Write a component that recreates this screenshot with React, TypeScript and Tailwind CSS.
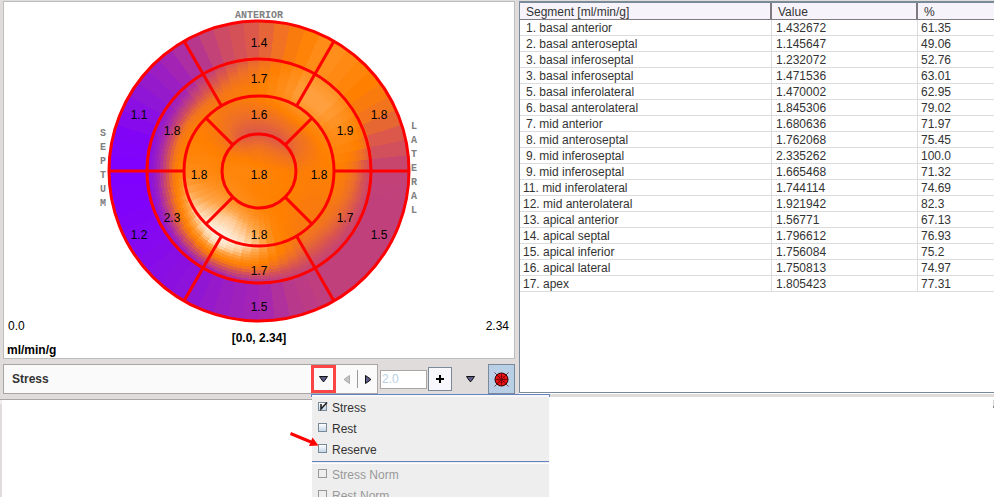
import React from "react";

type Row = [string, string, string];

const rows: Row[] = [
  ["1. basal anterior", "1.432672", "61.35"],
  ["2. basal anteroseptal", "1.145647", "49.06"],
  ["3. basal inferoseptal", "1.232072", "52.76"],
  ["3. basal inferoseptal", "1.471536", "63.01"],
  ["5. basal inferolateral", "1.470002", "62.95"],
  ["6. basal anterolateral", "1.845306", "79.02"],
  ["7. mid anterior", "1.680636", "71.97"],
  ["8. mid anteroseptal", "1.762068", "75.45"],
  ["9. mid inferoseptal", "2.335262", "100.0"],
  ["9. mid inferoseptal", "1.665468", "71.32"],
  ["11. mid inferolateral", "1.744114", "74.69"],
  ["12. mid anterolateral", "1.921942", "82.3"],
  ["13. apical anterior", "1.56771", "67.13"],
  ["14. apical septal", "1.796612", "76.93"],
  ["15. apical inferior", "1.756084", "75.2"],
  ["16. apical lateral", "1.750813", "74.97"],
  ["17. apex", "1.805423", "77.31"],
];

// Colour scale from low (violet) to high (white) uptake.
const palette = [
  [127, 0, 255], [144, 22, 212], [166, 38, 176], [192, 64, 124], [216, 84, 80], [238, 112, 38],
  [255, 128, 0], [255, 143, 30], [255, 166, 74], [255, 208, 160], [255, 246, 236],
];

function colour(v: number) {
  const c = Math.max(0, Math.min(9.999, v));
  const i = Math.floor(c);
  const f = c - i;
  const rgb = palette[i].map((a, k) => Math.round(a + (palette[i + 1][k] - a) * f));
  return `rgb(${rgb.join(",")})`;
}

// Samples every 15 degrees, clockwise from anterior, for each radius.
const profile: { r: number; v: number[] }[] = [
  { r: 0, v: Array(24).fill(6.3) },
  { r: 19, v: [5.5, 5.4, 5.4, 5.5, 5.6, 5.8, 6.1, 6.1, 6.1, 6.1, 6.1, 6.1, 6.1, 6.1, 6.2, 6.2, 6.3, 6.3, 6.4, 6.3, 6.1, 5.9, 5.6, 5.5] },
  { r: 38, v: [4.1, 4.1, 4.1, 4.3, 4.7, 5.2, 5.8, 5.9, 6, 6, 6, 6.1, 6.3, 6.7, 7, 7, 6.9, 6.6, 6.3, 6.1, 5.7, 4.9, 4.3, 4.1] },
  { r: 56, v: [5, 5.1, 5.3, 5.3, 5.3, 5.6, 5.9, 5.8, 5.7, 5.7, 5.9, 6.3, 7.5, 8.3, 8.9, 8.5, 7.8, 7.2, 6.6, 6.3, 5.9, 5.5, 5, 4.9] },
  { r: 75, v: [6, 6.5, 7.2, 7.1, 6.6, 6.3, 6, 5.8, 5.6, 5.5, 5.6, 6.3, 8.5, 9.6, 10, 9.8, 9, 8, 6.8, 6.2, 6, 5.8, 5.6, 5.7] },
  { r: 85, v: [5.9, 6.8, 7.7, 7.7, 7, 6.4, 5.8, 5.5, 5.2, 5, 5, 5.9, 7.2, 8.6, 9.5, 8.3, 7, 6.1, 5.6, 5.5, 5.4, 5.3, 5.3, 5.6] },
  { r: 96, v: [5.5, 6.6, 7.7, 7.7, 7, 6.2, 5, 4.7, 4.4, 4.2, 4.2, 4.8, 5.7, 6, 6, 5.1, 4.2, 3.4, 2.8, 2.9, 3.1, 3.4, 4.1, 5] },
  { r: 105, v: [5.2, 6.3, 7.4, 7.4, 6.7, 5.8, 3.9, 3.8, 3.6, 3.5, 3.5, 3.7, 3.6, 3.4, 3.2, 2.7, 2, 1.4, 1.2, 1.4, 1.7, 2.2, 3.4, 4.4] },
  { r: 113, v: [4.7, 5.9, 7.2, 7.1, 6.2, 4.8, 3.3, 3.1, 3.1, 3.1, 3.1, 2.9, 2.1, 1.6, 1.1, 0.8, 0.5, 0.4, 0.4, 0.4, 0.9, 1.6, 2.6, 3.8] },
  { r: 122, v: [4.3, 5.7, 7.1, 6.4, 5.6, 4.2, 3.1, 3, 3, 3, 3, 2.7, 1.9, 1.5, 0.9, 0.6, 0.3, 0.1, 0, 0.2, 0.8, 1.5, 2.5, 3.6] },
  { r: 150, v: [4.3, 5.6, 7, 6.3, 5.4, 4.1, 3.1, 3, 3, 3, 3, 2.7, 1.9, 1.5, 0.9, 0.6, 0.3, 0.1, 0, 0.2, 0.8, 1.5, 2.4, 3.5] },
];

function sample(r: number, deg: number) {
  const a = deg / 15;
  const i = Math.floor(a) % 24;
  const f = a - Math.floor(a);
  let k = 0;
  while (k < profile.length - 2 && profile[k + 1].r < r) k++;
  const lo = profile[k];
  const hi = profile[k + 1];
  const g = (r - lo.r) / (hi.r - lo.r);
  const at = (v: number[]) => v[i] + (v[(i + 1) % 24] - v[i]) * f;
  return at(lo.v) + (at(hi.v) - at(lo.v)) * g;
}

const CX = 259;
const CY = 171;

function point(r: number, deg: number) {
  const t = (deg * Math.PI) / 180;
  return [CX + r * Math.sin(t), CY - r * Math.cos(t)];
}

const STEP = 6;
const cells: { d: string; fill: string }[] = [];
for (let r = 150; r > 0; r -= 3) {
  for (let deg = 0; deg < 360; deg += STEP) {
    const [x1, y1] = point(r, deg);
    const [x2, y2] = point(r, deg + STEP);
    cells.push({
      d: `M${CX} ${CY}L${x1.toFixed(2)} ${y1.toFixed(2)}A${r} ${r} 0 0 1 ${x2.toFixed(2)} ${y2.toFixed(2)}Z`,
      fill: colour(sample(r > 114 ? 136 : r - 1, deg + STEP / 2)),
    });
  }
}

const outerSpokes = [30, 90, 150, 210, 270, 330];
const innerSpokes = [45, 135, 225, 315];

const labels: [number, number, string][] = [
  [259, 47, "1.4"], [259, 83, "1.7"], [259, 119, "1.6"], [259, 179, "1.8"],
  [199, 179, "1.8"], [319, 179, "1.8"], [139, 119, "1.1"], [172, 135, "1.8"],
  [345, 135, "1.9"], [379, 119, "1.8"], [172, 222, "2.3"], [139, 239, "1.2"],
  [345, 222, "1.7"], [379, 239, "1.5"], [259, 239, "1.8"], [259, 275, "1.7"], [259, 311, "1.5"],
];

function Spoke({ deg, from, to }: { deg: number; from: number; to: number }) {
  const [x1, y1] = point(from, deg);
  const [x2, y2] = point(to, deg);
  return <line x1={x1} y1={y1} x2={x2} y2={y2} />;
}

function PolarMap() {
  return (
    <svg viewBox="89 2 340 318" width="340" height="318" className="mx-auto block overflow-visible">
      <g shapeRendering="crispEdges">
        {cells.map((c, i) => (
          <path key={i} d={c.d} fill={c.fill} />
        ))}
      </g>
      <g fill="none" stroke="#ff0000" strokeWidth="3">
        {[150, 112, 75, 37].map((r) => (
          <circle key={r} cx={CX} cy={CY} r={r} />
        ))}
        {outerSpokes.map((d) => (
          <Spoke key={d} deg={d} from={75} to={150} />
        ))}
        {innerSpokes.map((d) => (
          <Spoke key={d} deg={d} from={37} to={75} />
        ))}
      </g>
      <g textAnchor="middle" className="fill-black text-[12px]">
        {labels.map(([x, y, t], i) => (
          <text key={i} x={x} y={y}>{t}</text>
        ))}
      </g>
      <g textAnchor="middle" className="fill-[#808080] font-['Liberation_Mono',monospace] text-[10px] font-bold">
        <text x="259" y="18">ANTERIOR</text>
        {"SEPTUM".split("").map((c, i) => (
          <text key={i} x="103" y={136 + i * 14}>{c}</text>
        ))}
        {"LATERAL".split("").map((c, i) => (
          <text key={i} x="414" y={129 + i * 14}>{c}</text>
        ))}
      </g>
    </svg>
  );
}

function DownTriangle() {
  return (
    <svg width="9" height="6" viewBox="0 0 9 6" className="block">
      <path d="M0.5 0.5H8.5L5 5.5H4Z" fill="#5d5d8c" stroke="#111" />
    </svg>
  );
}

function MapIcon() {
  return (
    <svg width="15" height="15" viewBox="0 0 15 15" className="block">
      <circle cx="7.5" cy="7.5" r="6.5" fill="#ee1111" stroke="#300" />
      <circle cx="7.5" cy="7.5" r="3.2" fill="none" stroke="#900" strokeWidth="0.6" />
      <path d="M7.5 1V14M1 7.5H14M0.5 0.5L14.5 14.5M14.5 0.5L0.5 14.5" stroke="#500" strokeWidth="0.7" />
    </svg>
  );
}

function Toolbar() {
  return (
    <div className="relative mt-[5px] flex h-[30px] items-center">
      <div className="flex h-full flex-1 border border-[#aaa6a6] bg-[#fafafa]">
        <div className="flex flex-1 items-center pl-2 text-[12px] font-bold text-[#333]">Stress</div>
        <button
          aria-label="Choose map"
          className="flex w-[25px] items-center justify-center border-[3px] border-[#fb4444] bg-[#fafafa]"
        >
          <DownTriangle />
        </button>
        <button aria-label="Previous" className="flex w-[21px] items-center justify-center">
          <svg width="6" height="9" viewBox="0 0 6 9"><path d="M5.5 0.5V8.5L0.5 5V4Z" fill="#c4c4c4" stroke="#aaa" /></svg>
        </button>
        <div className="my-[5px] w-px bg-[#999]" />
        <button aria-label="Next" className="flex w-[19px] items-center justify-center">
          <svg width="6" height="9" viewBox="0 0 6 9"><path d="M0.5 0.5V8.5L5.5 5V4Z" fill="#5d5d8c" stroke="#111" /></svg>
        </button>
      </div>
      <input
        aria-label="Step"
        defaultValue="2.0"
        className="ml-[2px] h-[19px] w-[47px] border border-[#aaa6a6] bg-white pl-px text-[12px] text-[#b8cfe5] outline-none"
      />
      <button
        aria-label="Add"
        className="ml-px flex h-[24px] w-[24px] items-center justify-center border border-[#7a8a99] bg-[#f8f8fc]"
      >
        <svg width="8" height="8" viewBox="0 0 8 8"><path d="M4 0V8M0 4H8" stroke="#000" strokeWidth="2" /></svg>
      </button>
      <button aria-label="More" className="flex h-full w-[36px] items-center justify-center">
        <DownTriangle />
      </button>
      <button
        aria-label="Polar map"
        className="flex h-full w-[27px] items-center justify-center border border-[#7a8a99] bg-[#b8cfe5]"
      >
        <MapIcon />
      </button>
      <Menu />
    </div>
  );
}

function MenuItem({ label, checked, disabled }: { label: string; checked?: boolean; disabled?: boolean }) {
  return (
    <label
      className={`flex h-[21px] items-center gap-1 pl-[6px] text-[12px] ${disabled ? "text-[#999]" : "text-[#333]"}`}
    >
      <span className="relative -mt-[2px] block h-[10px] w-[10px]">
        <input
          type="checkbox"
          defaultChecked={checked}
          disabled={disabled}
          className="block h-[9px] w-[9px] appearance-none border border-[#7a8a99] bg-linear-to-b from-white to-[#c4d6e8] disabled:border-[#999] disabled:bg-none"
        />
        {checked && (
          <svg width="10" height="10" viewBox="0 0 10 10" className="pointer-events-none absolute top-0 left-0">
            <path d="M3 2V7L9 0.5" fill="none" stroke="#222" strokeWidth="1.6" />
          </svg>
        )}
      </span>
      <span>{label}</span>
    </label>
  );
}

function Menu() {
  return (
    <div className="absolute top-[30px] right-[-35px] z-10 w-[239px]">
      <div className="h-[3px] border border-b-0 border-[#6382bf] bg-[#f8f8f8]" />
      <div className="mr-px ml-px bg-[#eeeeee]">
        <MenuItem label="Stress" checked />
        <MenuItem label="Rest" />
        <MenuItem label="Reserve" />
        <hr className="my-px border-[#6382bf]" />
        <div className="h-px bg-white" />
        <MenuItem label="Stress Norm" disabled />
        <MenuItem label="Rest Norm" disabled />
      </div>
      <svg width="30" height="18" viewBox="0 0 30 18" className="absolute top-[37px] left-[-21px]">
        <path d="M0.5 2.5L21 11" stroke="#ff0000" strokeWidth="3" />
        <path d="M28.5 14.5L19 15L22.5 6.5Z" fill="#ff0000" />
      </svg>
    </div>
  );
}

function SegmentTable() {
  return (
    <div className="flex-1 border-t-2 border-b border-l border-[#7a8a99] bg-white">
      <table className="w-full table-fixed border-separate border-spacing-0 text-left text-[12px] leading-[14px] text-[#333]">
        <colgroup>
          <col className="w-[252px]" />
          <col className="w-[146px]" />
          <col />
        </colgroup>
        <thead>
          <tr className="bg-[#f6f3fb]">
            <th className="h-[17px] border-r-2 border-b border-[#7f7a80] pt-[2px] pb-0 pl-[6px] font-normal">Segment [ml/min/g]</th>
            <th className="border-r-2 border-b border-[#7f7a80] pt-[2px] pb-0 pl-[6px] font-normal">Value</th>
            <th className="border-b border-[#7f7a80] pt-[2px] pb-0 pl-[6px] font-normal">%</th>
          </tr>
        </thead>
        <tbody>
          {rows.map(([name, value, pct], i) => (
            <tr key={i}>
              <td className={`h-[16px] border-r border-b border-[#dcdcdc] pt-px pb-0 ${name[1] === "." ? "pl-[6px]" : "pl-[3px]"}`}>
                {name}
              </td>
              <td className="border-r border-b border-[#dcdcdc] pt-px pb-0 pl-[4px]">{value}</td>
              <td className="border-b border-[#dcdcdc] pt-px pb-0 pl-[3px]">{pct}</td>
            </tr>
          ))}
        </tbody>
      </table>
    </div>
  );
}

export default function App() {
  return (
    <div className="flex h-screen flex-col overflow-hidden bg-white font-['Liberation_Sans',Arial,sans-serif] text-[12px] text-black">
      <div className="grid grid-cols-[519fr_475fr]">
        <div className="border-b border-[#aaa6a6] bg-[#e0dcdc] pt-px pr-1 pb-[5px] pl-[3px]">
          <div className="border border-[#bdbdbd] bg-white pb-[2px]">
            <PolarMap />
            <div className="flex justify-between pr-[5px] pl-1 leading-[12px]">
              <span>0.0</span>
              <span>2.34</span>
            </div>
            <div className="text-center leading-[12px] font-bold">[0.0, 2.34]</div>
            <div className="pl-[3px] leading-[12px] font-bold">ml/min/g</div>
          </div>
          <Toolbar />
        </div>
        <div className="flex flex-col">
          <div className="flex flex-1 flex-col bg-[#e0dcdc] pt-px">
            <SegmentTable />
          </div>
          <div className="h-px bg-white" />
          <div className="h-[3px] bg-[#e0dcdc]" />
          <div className="h-[3px] bg-white" />
        </div>
      </div>
      <div className="flex flex-1 justify-between">
        <div className="w-[2px] border-t-4 border-[#f0eeee] bg-[#e0dcdc]" />
        <div className="h-[8px] w-px border-b-2 border-[#888] bg-[#d4d4d4]" />
      </div>
    </div>
  );
}
